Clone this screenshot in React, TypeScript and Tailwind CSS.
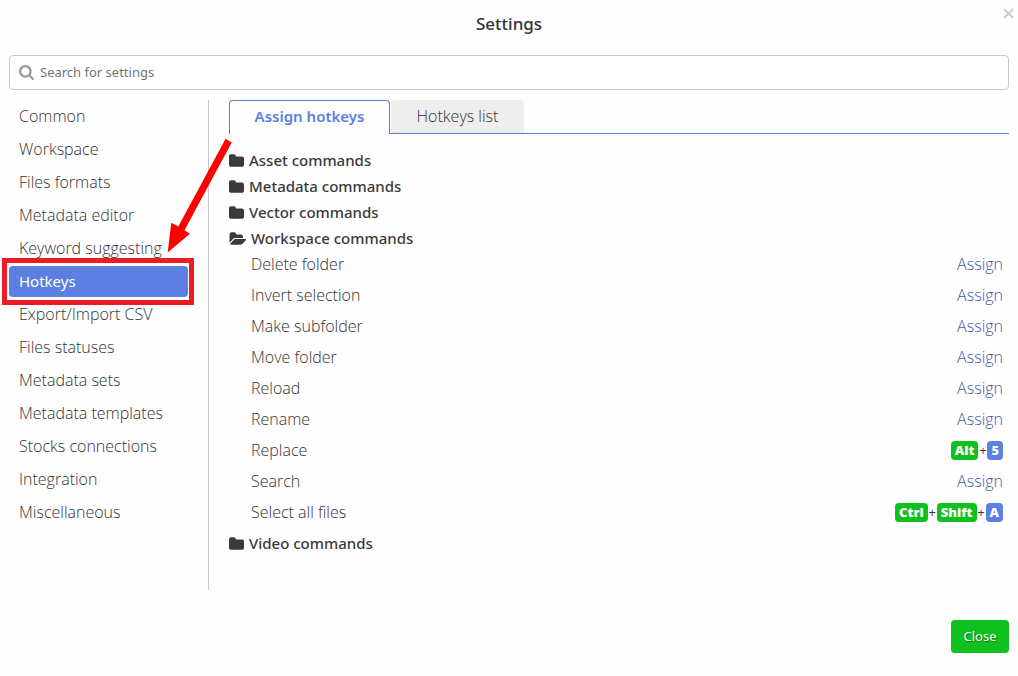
import { Fragment } from "react";

const sections = [
  "Common",
  "Workspace",
  "Files formats",
  "Metadata editor",
  "Keyword suggesting",
  "Hotkeys",
  "Export/Import CSV",
  "Files statuses",
  "Metadata sets",
  "Metadata templates",
  "Stocks connections",
  "Integration",
  "Miscellaneous",
];

type Command = { name: string; keys?: string[] };
type Group = { name: string; commands?: Command[] };

const groups: Group[] = [
  { name: "Asset commands" },
  { name: "Metadata commands" },
  { name: "Vector commands" },
  {
    name: "Workspace commands",
    commands: [
      { name: "Delete folder" },
      { name: "Invert selection" },
      { name: "Make subfolder" },
      { name: "Move folder" },
      { name: "Reload" },
      { name: "Rename" },
      { name: "Replace", keys: ["Alt", "5"] },
      { name: "Search" },
      { name: "Select all files", keys: ["Ctrl", "Shift", "A"] },
    ],
  },
  { name: "Video commands" },
];

function FolderIcon() {
  return (
    <svg viewBox="64 128 1664 1408" className="h-[13px] w-[15px]" fill="currentColor" aria-hidden="true">
      <path d="M1728 608v704q0 92-66 158t-158 66h-1216q-92 0-158-66t-66-158v-960q0-92 66-158t158-66h320q92 0 158 66t66 158v32h672q92 0 158 66t66 158z" />
    </svg>
  );
}

function FolderOpenIcon() {
  return (
    <svg viewBox="0 128 1944 1408" className="h-[13px] w-[17px]" fill="currentColor" aria-hidden="true">
      <path d="M1943 952q0 31-31 66l-336 396q-43 51-120.5 86.5t-143.5 35.5h-1088q-34 0-60.5-13t-26.5-43q0-31 31-66l336-396q43-51 120.5-86.5t143.5-35.5h1088q34 0 60.5 13t26.5 43zm-343-344v160h-832q-94 0-197 47.5t-164 119.5l-337 396-5 6q0-4-.5-12.5t-.5-12.5v-960q0-92 66-158t158-66h320q92 0 158 66t66 158v32h544q92 0 158 66t66 158z" />
    </svg>
  );
}

function SearchIcon() {
  return (
    <svg viewBox="64 128 1664 1664" className="h-[15px] w-[15px] shrink-0 text-[#999]" fill="currentColor" aria-hidden="true">
      <path d="M1216 832q0-185-131.5-316.5t-316.5-131.5-316.5 131.5-131.5 316.5 131.5 316.5 316.5 131.5 316.5-131.5 131.5-316.5zm512 832q0 52-38 90t-90 38q-54 0-90-38l-343-342q-179 124-399 124-143 0-273.5-55.5t-225-150-150-225-55.5-273.5 55.5-273.5 150-225 225-150 273.5-55.5 273.5 55.5 225 150 150 225 55.5 273.5q0 220-124 399l343 343q37 37 37 90z" />
    </svg>
  );
}

function Shortcut({ keys }: { keys: string[] }) {
  return (
    <span className="flex items-center text-[13px] leading-[19px] font-normal">
      {keys.map((key, i) => (
        <Fragment key={key}>
          {i > 0 && <span className="w-[9px] text-center">+</span>}
          <kbd
            className={
              i === keys.length - 1
                ? "rounded bg-[#5c80e1] px-1 font-['Open_Sans',sans-serif] font-extrabold text-white"
                : "rounded bg-[#10c01e] px-1 font-['Open_Sans',sans-serif] font-extrabold text-white"
            }
          >
            {key}
          </kbd>
        </Fragment>
      ))}
    </span>
  );
}

function CommandRow({ command }: { command: Command }) {
  return (
    <li className="mb-[5px] flex h-[26px] items-center justify-between pr-[6px] pl-[22px]">
      <span>{command.name}</span>
      {command.keys ? (
        <Shortcut keys={command.keys} />
      ) : (
        <button type="button" className="text-[#3f5ba6]">
          Assign
        </button>
      )}
    </li>
  );
}

export default function App() {
  return (
    <div className="relative min-h-screen bg-[#fefefe] px-[9px] pb-[23px] font-['Open_Sans',sans-serif] text-[16px] font-light text-[#333]">
      <header className="flex h-[55px] items-center justify-center pb-[7px]">
        <h1 className="font-['Noto_Sans',sans-serif] text-[17px] font-medium">Settings</h1>
        <button type="button" aria-label="Close settings" className="absolute top-2 right-1 text-[#ccc]">
          <svg viewBox="0 0 11 11" className="size-[11px]" fill="none" stroke="currentColor" strokeWidth="2" aria-hidden="true">
            <path d="M1 1l9 9M10 1l-9 9" />
          </svg>
        </button>
      </header>

      <label className="flex h-[35px] items-center gap-[6px] rounded border border-[#c8c8c8] bg-white px-[9px]">
        <SearchIcon />
        <input
          type="text"
          aria-label="Search for settings"
          placeholder="Search for settings"
          className="min-w-0 flex-1 font-['Noto_Sans',sans-serif] text-[13px] font-normal outline-none placeholder:text-[#757575]"
        />
      </label>

      <div className="mt-[10px] flex min-h-[490px]">
        <nav className="relative w-[200px] shrink-0 border-r border-[#c8c8c8] pt-[1px] pr-5">
          <ul className="flex flex-col gap-[2px]">
            {sections.map((name) => (
              <li key={name} className="relative">
                <a
                  href="#"
                  className={
                    name === "Hotkeys"
                      ? "block h-[31px] rounded bg-[#5c80e1] px-[10px] font-['Noto_Sans',sans-serif] text-[15px] leading-[31px] font-normal text-white"
                      : "block h-[31px] px-[10px] leading-[31px] whitespace-nowrap"
                  }
                >
                  {name}
                </a>
                {name === "Hotkeys" && (
                  <span className="pointer-events-none absolute -top-2 -right-[6px] -bottom-2 -left-[7px] border-[5px] border-[#ed1c24]" />
                )}
              </li>
            ))}
          </ul>
          <svg
            viewBox="167 138 66 116"
            className="pointer-events-none absolute top-[38px] left-[158px] h-[116px] w-[66px]"
            fill="#f00"
            aria-hidden="true"
          >
            <path d="M225.6 138.7L231.7 142.4L184.5 230.3L190 233.7L167.7 252.5L171.3 222.7L178.3 226.5z" />
          </svg>
        </nav>

        <main className="min-w-0 flex-1 pl-5">
          <div role="tablist" className="flex h-[34px] border-b border-[#5c80e1]">
            <button
              type="button"
              role="tab"
              aria-selected="true"
              className="h-[34px] w-[161px] rounded-t border border-b-0 border-[#5c80e1] bg-[#fefefe] pb-[2px] font-['Noto_Sans',sans-serif] text-[15px] font-semibold text-[#5c80e1]"
            >
              Assign hotkeys
            </button>
            <button
              type="button"
              role="tab"
              aria-selected="false"
              className="ml-[1px] h-[33px] w-[133px] rounded-t bg-[#eee] pb-[2px]"
            >
              Hotkeys list
            </button>
          </div>

          <ul className="pt-[13px]">
            {groups.map((group) => (
              <li key={group.name}>
                <button
                  type="button"
                  className="flex h-[26px] items-center gap-[5px] font-['Noto_Sans',sans-serif] text-[15px] font-medium text-[#3a3a3a]"
                >
                  {group.commands ? <FolderOpenIcon /> : <FolderIcon />}
                  {group.name}
                </button>
                {group.commands && (
                  <ul>
                    {group.commands.map((command) => (
                      <CommandRow key={command.name} command={command} />
                    ))}
                  </ul>
                )}
              </li>
            ))}
          </ul>
        </main>
      </div>

      <footer className="mt-[30px] flex justify-end">
        <button
          type="button"
          className="h-[33px] min-w-[58px] rounded bg-[#10c01e] px-3 font-['Noto_Sans',sans-serif] text-[13px] font-normal text-white text-shadow-[1px_1px_1px_rgba(0,0,0,0.4)]"
        >
          Close
        </button>
      </footer>
    </div>
  );
}
